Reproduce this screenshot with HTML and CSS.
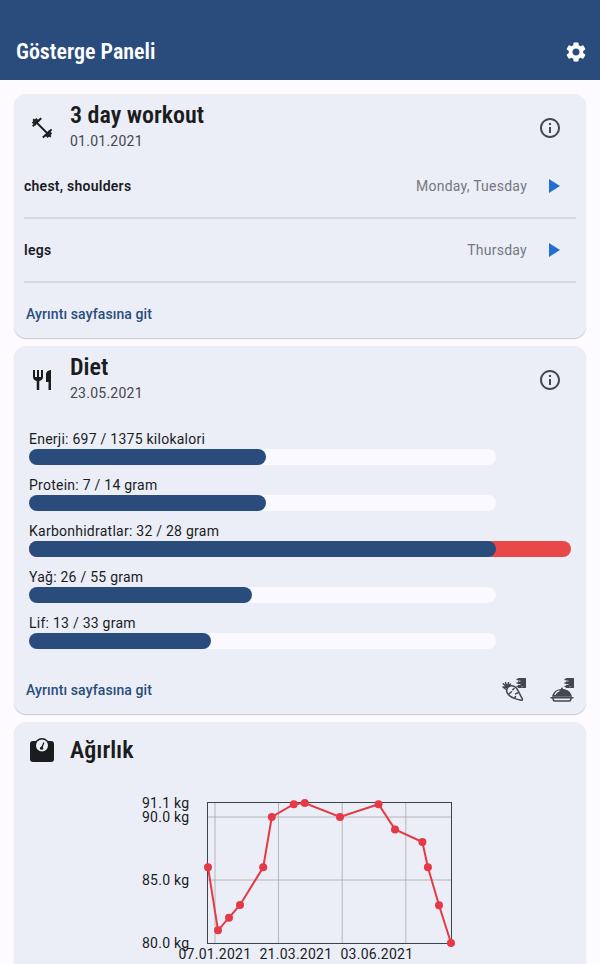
FILE: index.html
```html
<!DOCTYPE html>
<html lang="tr">
<head>
<meta charset="utf-8">
<title>Gösterge Paneli</title>
<link rel="stylesheet" href="styles.css">
</head>
<body>
<header class="appbar">
  <h1 class="appbar-title">Gösterge Paneli</h1>
  <svg class="icon" viewBox="0 0 24 24" fill="#fff"><path d="M19.14 12.94c.04-.3.06-.61.06-.94 0-.32-.02-.64-.07-.94l2.03-1.58c.18-.14.23-.41.12-.61l-1.92-3.32c-.12-.22-.37-.29-.59-.22l-2.39.96c-.5-.38-1.03-.7-1.62-.94L14.4 2.81c-.04-.24-.24-.41-.48-.41h-3.84c-.24 0-.43.17-.47.41l-.36 2.54c-.59.24-1.13.57-1.62.94l-2.39-.96c-.22-.08-.47 0-.59.22L2.74 8.87c-.12.21-.08.47.12.61l2.03 1.58c-.05.3-.09.63-.09.94s.02.64.07.94l-2.03 1.58c-.18.14-.23.41-.12.61l1.92 3.32c.12.22.37.29.59.22l2.39-.96c.5.38 1.03.7 1.62.94l.36 2.54c.05.24.24.41.48.41h3.84c.24 0 .44-.17.47-.41l.36-2.54c.59-.24 1.13-.56 1.62-.94l2.39.96c.22.08.47 0 .59-.22l1.92-3.32c.12-.22.07-.47-.12-.61l-2.01-1.58zM12 15.6c-1.98 0-3.6-1.62-3.6-3.6s1.62-3.6 3.6-3.6 3.6 1.62 3.6 3.6-1.62 3.6-3.6 3.6z"/></svg>
</header>
<main class="cards">
  <section class="card">
    <div class="card-head">
      <svg class="icon" viewBox="0 0 24 24"><g stroke="#1a1c1e" fill="none"><path stroke-width="1.8" d="M6 6l12 12"/><path stroke-width="2.7" d="M4.1 8.7L8.7 4.1M15.3 19.9l4.6-4.6"/><path stroke-width="2" d="M2.6 7.3L7.1 2.8M16.9 21.2l4.5-4.5M2.7 10.2l2.2-2.1M8.2 4.9l3-2.7M12.8 21.6l3-2.7M19.1 15.9l2.5-2.5M3.2 3.2l1.8 1.8M19 19l1.8 1.8"/></g></svg>
      <div class="titles"><h2 class="card-title">3 day workout</h2><p class="date">01.01.2021</p></div>
      <svg class="icon info" viewBox="0 0 24 24"><path d="M11 7h2v2h-2zm0 4h2v6h-2zm1-9C6.48 2 2 6.48 2 12s4.480 10 10 10 10-4.480 10-10S17.520 2 12 2zm0 18c-4.410 0-8-3.590-8-8s3.590-8 8-8 8 3.590 8 8-3.590 8-8 8z"/></svg>
    </div>
    <div class="row"><span class="row-name">chest, shoulders</span><span class="days">Monday, Tuesday</span><svg class="icon play" viewBox="0 0 24 24"><path d="M8 5v14l11-7z"/></svg></div>
    <div class="divider"></div>
    <div class="row"><span class="row-name">legs</span><span class="days">Thursday</span><svg class="icon play" viewBox="0 0 24 24"><path d="M8 5v14l11-7z"/></svg></div>
    <div class="divider"></div>
    <div class="card-foot"><a class="link">Ayrıntı sayfasına git</a></div>
  </section>

  <section class="card diet">
    <div class="card-head">
      <svg class="icon" viewBox="0 0 24 24" fill="#1a1c1e"><path d="M11 9H9V2H7v7H5V2H3v7c0 2.120 1.660 3.840 3.750 3.970V22h2.500v-9.030C11.340 12.840 13 11.120 13 9V2h-2v7zm5-3v8h2.500v8H21V2c-2.760 0-5 2.240-5 4z"/></svg>
      <div class="titles"><h2 class="card-title">Diet</h2><p class="date">23.05.2021</p></div>
      <svg class="icon info" viewBox="0 0 24 24"><path d="M11 7h2v2h-2zm0 4h2v6h-2zm1-9C6.480 2 2 6.480 2 12s4.480 10 10 10 10-4.480 10-10S17.520 2 12 2zm0 18c-4.410 0-8-3.590-8-8s3.590-8 8-8 8 3.590 8 8-3.590 8-8 8z"/></svg>
    </div>
    <div class="gauges">
      <div class="gauge"><span class="label">Enerji: 697 / 1375 kilokalori</span><div class="track"><div class="fill" style="width:236.500px"></div></div></div>
      <div class="gauge"><span class="label">Protein: 7 / 14 gram</span><div class="track"><div class="fill" style="width:236.500px"></div></div></div>
      <div class="gauge"><span class="label">Karbonhidratlar: 32 / 28 gram</span><div class="track over"><div class="fill" style="width:467px"></div></div></div>
      <div class="gauge"><span class="label">Yağ: 26 / 55 gram</span><div class="track"><div class="fill" style="width:223px"></div></div></div>
      <div class="gauge"><span class="label">Lif: 13 / 33 gram</span><div class="track"><div class="fill" style="width:182px"></div></div></div>
    </div>
    <div class="card-foot"><a class="link">Ayrıntı sayfasına git</a>
      <svg class="icon" viewBox="0 0 24 24"><g fill="none" stroke="#44474e" stroke-width="1.500" stroke-linecap="round" stroke-linejoin="round"><path d="M4.700 12.200C5 9.400 7.200 7.500 10 7.800c3 .3 4.600 2 5.900 4.600l4.400 8.400c.4.900-.2 1.700-1.200 1.500-3.500-.8-8.200-2-11-4.200-2.200-1.700-3.700-3.600-3.400-5.900zM5 9.300L1 9M5 9.300L1.300 5.800M5 9.300L3.600 4.800M5 9.300l1.500-4.500M5 9.300l3.500-3.200M1 9l2.500 2M7.500 15.500l2-1.700M12 10.500l-1.200 1.300M15.600 15l-2 .7M12.500 20l1-1.500"/></g><path fill="#44474e" d="M16 0h8v10h-8z"/><path d="M14.500 1.500h4M14.500 5h4M14.500 8.500h4" stroke="#44474e" stroke-width="1.500"/><path d="M16 3h2.500M16 6.500h2.500M19.500 8.800h1" stroke="#ebeef6" stroke-width=".8"/></svg>
      <svg class="icon meal" viewBox="0 0 24 24"><path fill="#44474e" d="M2 18.800C2.800 14 6.500 11.200 11 10.900c0-1 .4-1.500 1-1.500s1 .5 1 1.500c4.500.3 8.200 3.100 9 7.900z"/><path d="M5 16.500c.8-1.800 2-3 4-3.700" stroke="#ebeef6" stroke-width="1.300" fill="none" stroke-linecap="round"/><path d="M1 19.700h22M3 20.200c0 2 .7 2.800 2 2.800h14c1.300 0 2-.8 2-2.800" stroke="#44474e" stroke-width="1.400" fill="none" stroke-linecap="round"/><path fill="#44474e" d="M16 0h8v10h-8z"/><path d="M14.500 1.500h4M14.500 5h4M14.500 8.500h4" stroke="#44474e" stroke-width="1.500"/><path d="M16 3h2.500M16 6.500h2.500M19.500 8.800h1" stroke="#ebeef6" stroke-width=".8"/></svg>
    </div>
  </section>

  <section class="card weight">
    <div class="card-head single">
      <svg class="icon" viewBox="0 0 24 24"><rect y="3" width="24" height="21" rx="3" fill="#1a1c1e"/><circle cx="12" cy="7.500" r="7.500" fill="#1a1c1e"/><circle cx="12" cy="7.500" r="6" fill="#ebeef6"/><circle cx="11.600" cy="10.200" r="1.600" fill="#1a1c1e"/><path d="M11.600 10.200L13.700 5" stroke="#1a1c1e" stroke-width="1.300" stroke-linecap="round"/></svg>
      <div class="titles"><h2 class="card-title">Ağırlık</h2></div>
    </div>
    <svg class="chart" viewBox="130 786 340 178" width="340" height="178">
      <g class="grid"><path d="M215 803v140M278.500 803v140M342.200 803v140M405.800 803v140M208 817h243M208 880h243"/></g>
      <rect x="207.500" y="802.500" width="244" height="141" fill="none" stroke="#37434f"/>
      <polyline fill="none" stroke="#e63946" stroke-width="2" points="208,867.300 218,930.300 229,917.700 240,905 263.200,867.300 271.800,817 293.800,804.200 304.800,803 340,817 378.500,804.200 395,829.400 422.400,842 427.900,867.300 439,905.200 451,943"/>
      <g fill="#e63946"><circle cx="208" cy="867.300" r="4"/><circle cx="218" cy="930.300" r="4"/><circle cx="229" cy="917.700" r="4"/><circle cx="240" cy="905" r="4"/><circle cx="263.200" cy="867.300" r="4"/><circle cx="271.800" cy="817" r="4"/><circle cx="293.800" cy="804.200" r="4"/><circle cx="304.800" cy="803" r="4"/><circle cx="340" cy="817" r="4"/><circle cx="378.500" cy="804.200" r="4"/><circle cx="395" cy="829.400" r="4"/><circle cx="422.400" cy="842" r="4"/><circle cx="427.900" cy="867.300" r="4"/><circle cx="439" cy="905.200" r="4"/><circle cx="451" cy="943" r="4"/></g>
      <g class="axis"><text x="142" y="808">91.1 kg</text><text x="142" y="822">90.0 kg</text><text x="142" y="885">85.0 kg</text><text x="142" y="948">80.0 kg</text><text x="178.500" y="959">07.01.2021</text><text x="259.500" y="959">21.03.2021</text><text x="340.500" y="959">03.06.2021</text></g>
    </svg>
  </section>
</main>
</body>
</html>
```
FILE: styles.css
```css
* { box-sizing: border-box; margin: 0; padding: 0; }
html, body { height: 964px; overflow: hidden; }
body {
  background: #fdfbff;
  color: #1a1c1e;
  font: 14px/20px Roboto, sans-serif;
  letter-spacing: .25px;
}
.icon { width: 24px; height: 24px; flex: none; display: block; }
.appbar {
  height: 80px;
  padding: 24px 12px 0 16px;
  background: #2a4c7d;
  display: flex;
  align-items: center;
  justify-content: space-between;
}
.appbar-title, .card-title {
  font-family: "Roboto Condensed", Roboto, sans-serif;
  font-stretch: 75%;
  font-weight: 600;
  letter-spacing: 0;
  white-space: nowrap;
}
.appbar-title { font-size: 22px; line-height: 28px; color: #fff; }
.cards { padding: 14px 14px 0; display: flex; flex-direction: column; gap: 8px; }
.card {
  height: 244px;
  flex: none;
  background: #ebeef6;
  border-radius: 12px;
  box-shadow: 0 1px 1px rgba(0, 0, 0, .2);
  display: flex;
  flex-direction: column;
}
.diet { height: 368px; }
.weight { height: 400px; }
.card-head { height: 68px; padding: 0 24px 0 16px; display: flex; align-items: center; }
.titles { flex: 1; margin-left: 16px; padding-top: 1px; height: 52px; margin-bottom: 8px; }
.card-head .icon { margin-bottom: 0; }
.card-title { font-size: 24px; line-height: 32px; }
.date { color: #44474e; line-height: 20px; }
.info { fill: #44474e; }
.row { height: 48px; padding: 0 21px 0 10px; display: flex; align-items: center; }
.row-name { flex: 1; font-weight: 600; }
.days { color: #74777f; margin-right: 14px; }
.play { fill: #266dd3; }
.divider { height: 16px; margin: 0 10px; border: solid transparent; border-width: 7px 0; background: #d5d8e0 content-box; background-clip: padding-box; }
.card-foot { height: 48px; padding: 0 12px; margin-top: auto; display: flex; align-items: center; }
.link { flex: 1; color: #2a4c7d; font-weight: 500; letter-spacing: .1px; }
.meal { margin-left: 24px; }
.gauges { padding: 15px 15px 0; display: flex; flex-direction: column; gap: 10px; }
.gauge { height: 36px; }
.label { display: block; height: 20px; }
.track { width: 467px; height: 16px; border-radius: 8px; background: #f9f9ff; }
.over { width: 542px; background: #e84848; }
.fill { height: 16px; border-radius: 8px; background: #2a4c7d; }
.single { height: 56px; }
.single .titles { height: 32px; padding: 0; margin-bottom: 0; }
.chart { margin: 8px 0 0 116px; display: block; }
.grid { stroke: #9e9e9e; opacity: .7; fill: none; }
.axis { font: 14px Roboto, sans-serif; fill: #1a1c1e; letter-spacing: .25px; }
```
